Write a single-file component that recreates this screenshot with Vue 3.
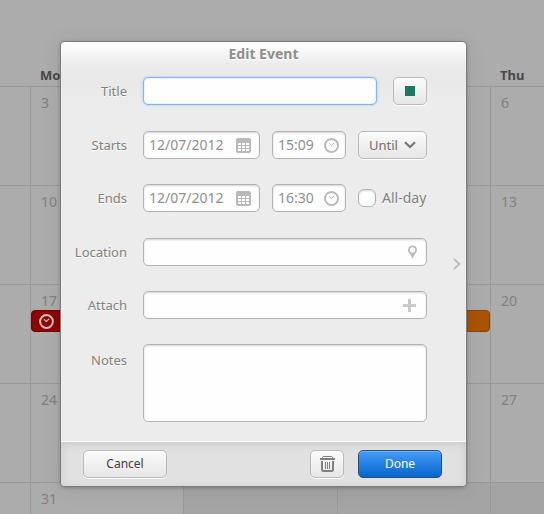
<script setup>
import { ref } from 'vue'

const form = ref({
  title: '',
  startDate: '12/07/2012',
  startTime: '15:09',
  endDate: '12/07/2012',
  endTime: '16:30',
  allDay: false,
  location: '',
  attach: '',
  notes: '',
})

const times = [
  { key: 'start', label: 'Starts' },
  { key: 'end', label: 'Ends' },
]

const weekdays = ['', 'Mon', 'Tue', 'Wed', 'Thu']
const weeks = [
  ['', 3, 4, 5, 6],
  ['', 10, 11, 12, 13],
  ['', 17, 18, 19, 20],
  ['', 24, 25, 26, 27],
  ['', 31, '', '', ''],
]
</script>

<template>
  <div class="page">
    <div class="calendar" aria-hidden="true">
      <div class="week head">
        <div v-for="(d, i) in weekdays" :key="i" class="weekday">{{ d }}</div>
      </div>
      <div v-for="(week, w) in weeks" :key="w" class="week">
        <div
          v-for="(day, i) in week"
          :key="i"
          class="day"
          :class="{ outside: w === 4 && i > 1 }"
        >
          <span class="num">{{ day }}</span>
          <div v-if="day === 17" class="event red">
            <svg width="15" height="15" viewBox="0 0 15 15">
              <circle cx="7.5" cy="7.5" r="6.4" fill="none" stroke="currentColor" stroke-width="2" />
              <path d="M5 5.2 7.3 7.4 10.3 4.8" fill="none" stroke="currentColor" stroke-width="1.2" />
            </svg>
          </div>
          <div v-if="day === 19" class="event orange"></div>
        </div>
      </div>
    </div>

    <section class="dialog" role="dialog" aria-labelledby="dialog-title">
      <h1 id="dialog-title" class="titlebar">Edit Event</h1>

      <form id="event-form" class="form" @submit.prevent>
        <div class="row">
          <label class="label" for="title">Title</label>
          <div class="title-controls">
            <div class="field focused grow">
              <input id="title" v-model="form.title" type="text" />
            </div>
            <button type="button" class="btn square" aria-label="Colour">
              <span class="swatch"></span>
            </button>
          </div>
        </div>

        <div class="group">
          <div v-for="t in times" :key="t.key" class="row">
            <label class="label" :for="t.key + '-date'">{{ t.label }}</label>
            <div class="controls">
              <div class="field">
                <input :id="t.key + '-date'" v-model="form[t.key + 'Date']" type="text" />
                <svg width="15" height="15" viewBox="0 0 15 15">
                  <rect width="15" height="15" rx="2" fill="#bababa" />
                  <path
                    d="M2 5h3v2H2zM6 5h3v2H6zM10 5h3v2h-3zM2 8h3v2H2zM6 8h3v2H6zM10 8h3v2h-3zM2 11h3v2H2zM6 11h3v2H6zM10 11h3v2h-3z"
                    fill="#fff"
                  />
                </svg>
              </div>
              <div class="field time">
                <input v-model="form[t.key + 'Time']" type="text" :aria-label="t.label + ' time'" />
                <svg width="15" height="15" viewBox="0 0 15 15">
                  <circle cx="7.5" cy="7.5" r="6.5" fill="none" stroke="#bababa" stroke-width="2" />
                  <path d="M4.8 5.2 7.3 7.4 10.3 4.8" fill="none" stroke="#bababa" stroke-width="1" />
                </svg>
              </div>
              <button v-if="t.key === 'start'" type="button" class="btn until">
                Until
                <svg width="12" height="8" viewBox="0 0 12 8">
                  <path d="M1 1.2 6 6 11 1.2" fill="none" stroke="#777" stroke-width="2.2" />
                </svg>
              </button>
              <label v-else class="check">
                <input v-model="form.allDay" type="checkbox" />
                All-day
              </label>
            </div>
          </div>
        </div>

        <div class="group">
          <div class="row">
            <label class="label" for="location">Location</label>
            <div class="field">
              <input id="location" v-model="form.location" type="text" />
              <svg width="11" height="14" viewBox="0 0 11 14">
                <path
                  fill-rule="evenodd"
                  d="M5.5 0.5a4.5 4.5 0 0 1 4.5 4.5c0 2.2-1.7 3.4-2.6 5L5.5 13.5 3.6 10C2.7 8.4 1 7.2 1 5A4.5 4.5 0 0 1 5.5 .5zM5.5 2.3a2.7 2.7 0 1 0 0 5.4 2.7 2.7 0 0 0 0-5.4z"
                  fill="#bababa"
                />
              </svg>
            </div>
          </div>
          <div class="row">
            <label class="label" for="attach">Attach</label>
            <div class="field attach">
              <input id="attach" v-model="form.attach" type="text" />
              <svg width="13" height="13" viewBox="0 0 13 13">
                <path d="M5 0h3v5h5v3H8v5H5V8H0V5h5z" fill="#cacaca" />
              </svg>
            </div>
          </div>
          <div class="row notes-row">
            <label class="label" for="notes">Notes</label>
            <textarea id="notes" v-model="form.notes" class="notes"></textarea>
          </div>
        </div>
      </form>

      <button type="button" class="next" aria-label="Next">
        <svg width="8" height="12" viewBox="0 0 8 12">
          <path d="M1 1 6.3 6 1 11" fill="none" stroke="#bdbdbd" stroke-width="2" />
        </svg>
      </button>

      <footer class="footer">
        <button type="button" class="btn action">Cancel</button>
        <span class="grow"></span>
        <button type="button" class="btn square" aria-label="Delete">
          <svg width="15" height="16" viewBox="0 0 15 16">
            <path d="M0 2h15v2H0z" fill="#808080" />
            <path d="M2.5 2.5V1.5Q2.5 .5 3.5 .5h8q1 0 1 1V2.500" fill="none" stroke="#808080" />
            <path d="M2 5v8.500Q2 15 3.500 15h8Q13 15 13 13.500V5" fill="none" stroke="#808080" stroke-width="2" />
            <path d="M5.500 6v7M7.500 6v7M9.500 6v7" stroke="#808080" fill="none" />
          </svg>
        </button>
        <button type="submit" form="event-form" class="btn action primary">Done</button>
      </footer>
    </section>
  </div>
</template>

<style>
body {
  margin: 0;
}
</style>

<style scoped>
* {
  box-sizing: border-box;
}

.page {
  position: relative;
  min-height: 100vh;
  padding: 42px 78px 28px 61px;
  overflow: hidden;
  background: #acacac;
  color: #808080;
  font: 13px/18px 'Noto Sans', 'Open Sans', sans-serif;
}

.calendar {
  position: absolute;
  inset: 0;
  overflow: hidden;
}

.week {
  display: grid;
  grid-template-columns: 30px 153fr 154fr 153fr 54fr;
}

.head {
  padding-top: 66px;
  color: #484848;
  font-size: 13px;
  font-weight: 700;
}

.weekday {
  height: 20px;
  padding-left: 10px;
}

.day {
  height: 99px;
  padding-top: 7px;
  border-top: 1px solid #989898;
  border-left: 1px solid #989898;
}

.day:first-child {
  border-left: 0;
}

.outside {
  background: #a4a4a4;
}

.num {
  display: block;
  height: 18px;
  padding-left: 10px;
  font-size: 14px;
}

.event {
  height: 22px;
  border: 1px solid #7c0000;
  border-radius: 4px;
  color: #c8c0c0;
}

.event svg {
  display: block;
  margin: 3px 7px;
}

.red {
  background: #900000;
}

.orange {
  border-color: #8f4200;
  background: #ab5400;
}

.dialog {
  position: relative;
  display: grid;
  grid-template-columns: 1fr 39px;
  overflow: hidden;
  border-radius: 4px;
  background: linear-gradient(#fff, #ebebeb 24px, #e9e9e9 40px, #ececec 64px);
  box-shadow: 0 0 0 1px #7d7d7d, 0 1px 4px rgba(0, 0, 0, 0.35), 0 2px 24px rgba(0, 0, 0, 0.08);
}

.titlebar {
  grid-row: 1;
  grid-column: 1 / -1;
  margin: 0;
  padding-top: 3px;
  color: #8e8e8e;
  font-size: 14px;
  line-height: 18px;
  text-align: center;
  text-shadow: 0 1px 0 #fff;
}

.form {
  display: flex;
  flex-direction: column;
  gap: 26px;
  grid-row: 2;
  grid-column: 1;
  padding: 14px 0 19px;
}

.group {
  display: flex;
  flex-direction: column;
  gap: 25px;
}

.row {
  display: grid;
  grid-template-columns: 66px 1fr;
  column-gap: 16px;
  align-items: center;
}

.notes-row {
  align-items: start;
}

.notes-row .label {
  padding-top: 7px;
}

.label {
  text-align: right;
  text-shadow: 0 1px 0 #fff;
}

.controls {
  display: grid;
  grid-template-columns: 117fr 74fr 69fr;
  gap: 12px;
}

.title-controls {
  display: flex;
  gap: 16px;
}

.grow {
  flex: 1;
}

.field {
  display: flex;
  align-items: center;
  min-width: 0;
  height: 28px;
  padding: 0 8px 0 5px;
  border: 1px solid #b3b3b3;
  border-radius: 5px;
  background: #fefefe;
  box-shadow: inset 0 1px 2px #d4d4d4;
}

.field svg {
  flex: none;
}

.field input {
  flex: 1;
  width: 100%;
  min-width: 0;
  padding: 0;
  border: 0;
  outline: 0;
  background: none;
  color: #909090;
  font: inherit;
  font-size: 14px;
}

.focused {
  border-color: #8ab4e6;
  box-shadow: 0 0 3px #a9caf0, inset 0 0 2px #b4d2f2;
}

.time {
  padding-right: 6px;
}

.attach {
  padding-right: 10px;
}

.btn {
  display: flex;
  align-items: center;
  justify-content: center;
  height: 28px;
  padding: 0;
  border: 1px solid #bababa;
  border-radius: 5px;
  background: linear-gradient(#fbfbfb, #e6e6e6);
  box-shadow: 0 1px 0 #fff;
  color: #707070;
  font: inherit;
}

.until {
  gap: 6px;
}

.square {
  width: 34px;
}

.swatch {
  width: 10px;
  height: 10px;
  background: #1d7862;
}

.check {
  display: flex;
  align-items: center;
  gap: 6px;
  min-width: 0;
  font-size: 14px;
  white-space: nowrap;
  text-shadow: 0 1px 0 #fff;
}

.check input {
  flex: none;
  width: 18px;
  height: 18px;
  margin: 0;
  appearance: none;
  border: 1px solid #b3b3b3;
  border-radius: 6px;
  background: #fefefe;
  box-shadow: inset 0 1px 2px #d8d8d8;
}

.check input:checked {
  background: #3a8ae0;
}

.notes {
  display: block;
  width: 100%;
  height: 78px;
  padding: 5px;
  border: 1px solid #b3b3b3;
  border-radius: 5px;
  outline: 0;
  background: #fefefe;
  box-shadow: inset 0 1px 2px #d4d4d4;
  color: #909090;
  font: inherit;
  resize: none;
}

.next {
  grid-row: 1 / 4;
  grid-column: 2;
  align-self: center;
  justify-self: end;
  z-index: 1;
  padding: 4px 5px;
  border: 0;
  background: none;
}

.next svg {
  display: block;
}

.footer {
  display: flex;
  gap: 14px;
  grid-row: 3;
  grid-column: 1 / -1;
  padding: 8px 24px 8px 22px;
  border-top: 1px solid #fafafa;
  background: #e1e1e1;
  box-shadow: inset 0 2px 8px #c8c8c8;
}

.action {
  width: 84px;
  color: #404040;
  font-size: 12px;
}

.primary {
  border-color: #28507f;
  background: linear-gradient(#459cfb, #0765cd);
  box-shadow: inset 0 1px 0 #6db4ff;
  color: #fff;
}
</style>
